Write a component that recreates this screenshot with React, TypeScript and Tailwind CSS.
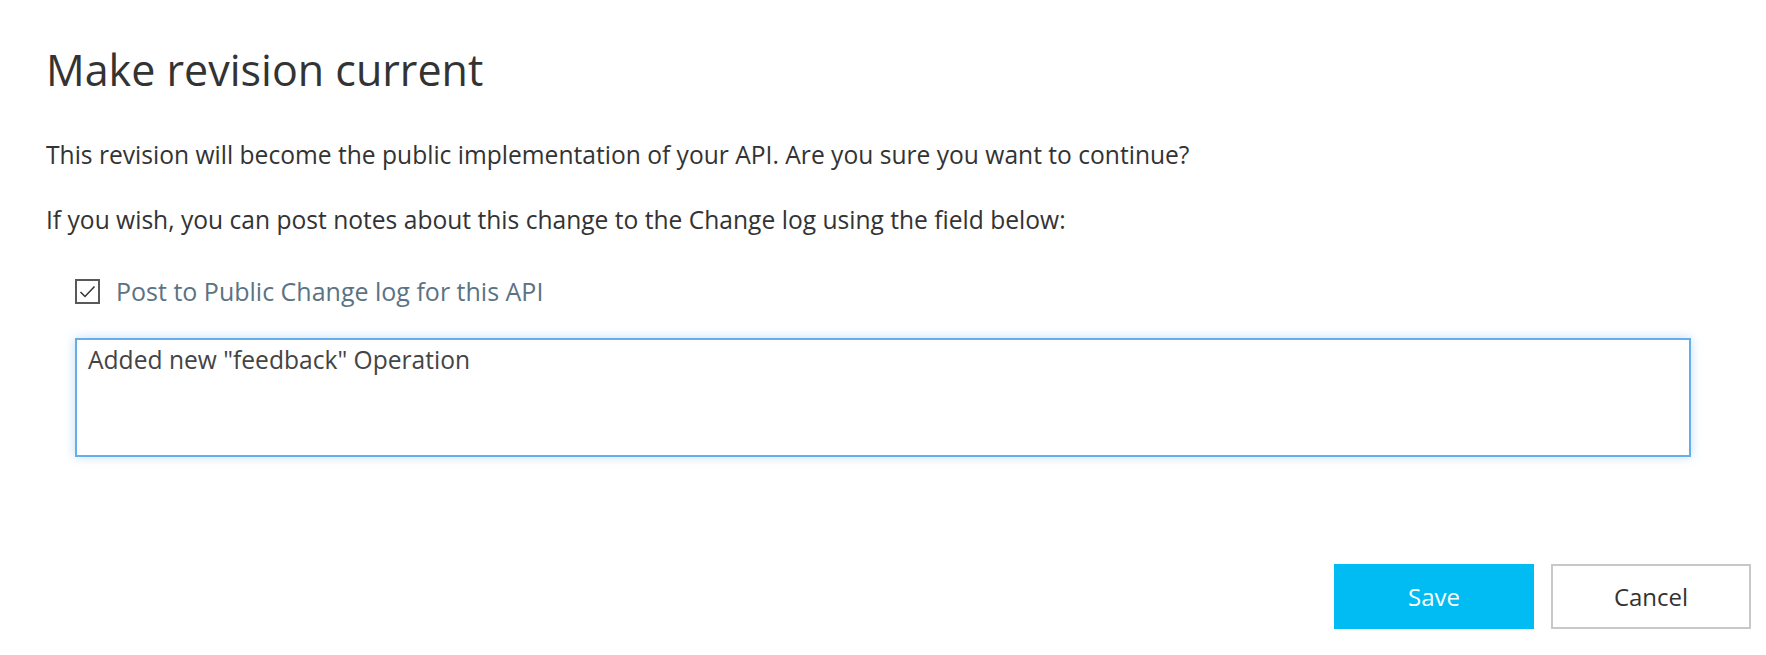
import { useState } from 'react';

const font = { fontFamily: '"Open Sans", "Noto Sans", sans-serif' };

export default function App() {
  const [checked, setChecked] = useState(true);
  const [notes, setNotes] = useState('Added new "feedback" Operation');

  return (
    <div className="min-h-[655px] bg-white pl-[46px] pr-[15px] text-[#333333]" style={font}>
      <h1 className="pt-[38px] text-[43px] leading-[64px] font-normal">Make revision current</h1>
      <p className="mt-[37px] text-[24.6px] leading-[32px]">
        This revision will become the public implementation of your API. Are you sure you want to continue?
      </p>
      <p className="mt-[33px] text-[24.6px] leading-[32px]">
        If you wish, you can post notes about this change to the Change log using the field below:
      </p>

      <label className="mt-[39px] ml-[29px] flex items-center gap-[16px] cursor-pointer">
        <span
          className="flex h-[25px] w-[25px] items-center justify-center border-2 border-[#595959] bg-white"
          onClick={() => setChecked(!checked)}
        >
          {checked && (
            <svg width="17" height="13" viewBox="0 0 17 13" fill="none">
              <path d="M1.5 7 L6 11.5 L15.5 1.5" stroke="#333333" strokeWidth="1.5" />
            </svg>
          )}
        </span>
        <span className="text-[25px] leading-[32px] text-[#5b7383]">Post to Public Change log for this API</span>
      </label>

      <div className="mt-[31px] ml-[29px] mr-[60px]">
        <textarea
          value={notes}
          onChange={(e) => setNotes(e.target.value)}
          className="block h-[119px] w-full resize-none border-2 border-[#66aeea] px-[11px] py-[4px] text-[24.6px] leading-[32px] text-[#444444] shadow-[0_0_10px_rgba(102,174,234,0.4)] outline-none"
        />
      </div>

      <div className="mt-[107px] flex justify-end gap-[17px]">
        <button className="h-[65px] w-[200px] bg-[#00bcf2] text-[24px] text-white">Save</button>
        <button className="h-[65px] w-[200px] border-2 border-[#c8c8c8] bg-white text-[24px] text-[#333333]">
          Cancel
        </button>
      </div>
    </div>
  );
}
